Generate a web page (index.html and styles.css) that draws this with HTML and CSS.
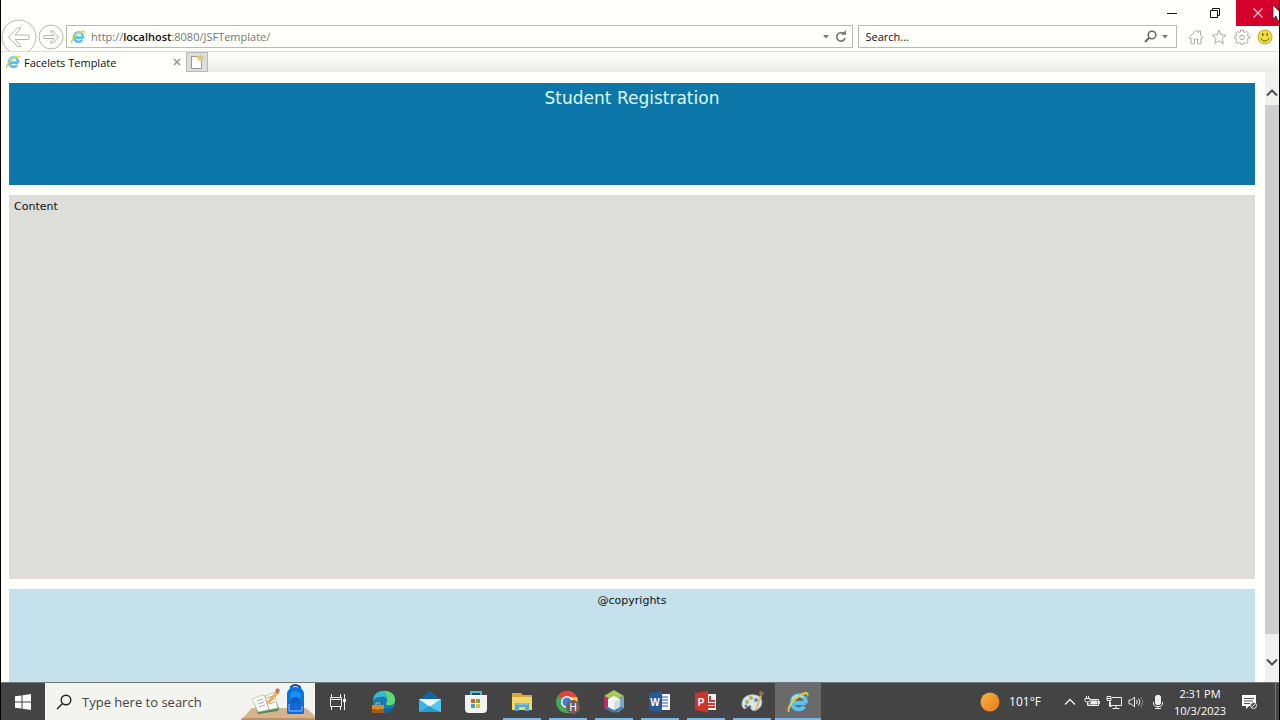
FILE: index.html
```html
<!DOCTYPE html>
<html lang="en">
  <head>
    <meta charset="utf-8">
    <title>Facelets Template</title>
    <link rel="stylesheet" href="styles.css">
  </head>
  <body>
    <!-- shared drawings -->
    <svg class="defs" aria-hidden="true">
      <symbol id="ie" viewBox="0 0 24 24">
        <path d="M20 13H8M18.400 16.500A7 7 0 1 1 19.800 13" fill="none" stroke="#58c3ee" stroke-width="4"/>
        <path d="M6 9.500A7 7 0 0 1 17 7.500" fill="none" stroke="#b4ecfc" stroke-width="1.500"/>
        <path d="M4 22C0 23 1 17 6 11S20 0 22 3c1 1 .5 3-.6 5C22 5 21 3.600 18 4.600 13 6.500 7 12 4.500 17c-1.500 3-1.500 4.500-.5 5z" fill="#e5cf3c"/>
      </symbol>
    </svg>

    <header class="chrome">
      <div class="titlebar">
        <button class="win" aria-label="Minimize"><svg width="12" height="12" viewBox="0 0 12 12"><path d="M1 6.500h10" stroke="#111"/></svg></button>
        <button class="win" aria-label="Restore"><svg width="12" height="12" viewBox="0 0 12 12" fill="none" stroke="#111"><path d="M1.500 3.500h7v7h-7zM3.500 3V1.500h7v7H9"/></svg></button>
        <button class="win close" aria-label="Close"><svg width="12" height="12" viewBox="0 0 12 12"><path d="M1.500 1.500l9 9M10.500 1.500l-9 9" stroke="#ffc4cc" stroke-width="1.300"/></svg></button>
        <svg class="cursor" width="8" height="18" viewBox="0 0 8 18"><path d="M1 1v14l3-3 2 5 2-1V8z" fill="#fff" stroke="#333" stroke-width=".8"/></svg>
      </div>
      <div class="toolbar">
        <button class="nav" aria-label="Back"><svg width="36" height="36" viewBox="0 0 36 36" fill="none" stroke="#b5b5b1"><circle cx="18" cy="18" r="17"/><path d="M7.500 18l9-9h3.500l-6 7h14v4.500H14l6 7h-3.500z"/></svg></button>
        <button class="nav" aria-label="Forward"><svg width="26" height="26" viewBox="0 0 26 26" fill="none" stroke="#b5b5b1"><circle cx="13" cy="13" r="12"/><path d="M20.500 13l-5.500-6h-3l4 4.500H6v3h10L12 19h3z"/></svg></button>
        <form class="field address">
          <svg width="16" height="16"><use href="#ie"/></svg>
          <label class="url" for="url">http://<b>localhost</b>:8080/JSFTemplate/</label>
          <input class="url-input" id="url" type="text">
          <button class="icon" type="button" aria-label="Show history"><svg width="8" height="6" viewBox="0 0 8 6"><path d="M1 1h6L4 4.500z" fill="#777"/></svg></button>
          <button class="icon" type="button" aria-label="Refresh"><svg width="12" height="14" viewBox="0 0 12 14"><path d="M8.500 3.500A4.200 4.200 0 1 0 10 8" fill="none" stroke="#777" stroke-width="1.700"/><path d="M6 4.800h5V0z" fill="#777"/></svg></button>
        </form>
        <form class="field find">
          <input class="find-input" type="text" placeholder="Search..." aria-label="Search the web">
          <button class="icon" type="button" aria-label="Search"><svg width="13" height="13" viewBox="0 0 13 13" fill="none" stroke="#666"><circle cx="8" cy="5" r="3.800" stroke-width="1.500"/><path d="M5.200 7.800L1 12" stroke-width="2"/></svg></button>
          <button class="icon" type="button" aria-label="Search providers"><svg width="8" height="6" viewBox="0 0 8 6"><path d="M1 1h6L4 4.500z" fill="#777"/></svg></button>
        </form>
        <div class="tools">
          <button class="icon" aria-label="Home"><svg width="16" height="16" viewBox="0 0 16 16" fill="none" stroke="#aaa"><path d="M1 8.500L8 1.500l2.500 2.300V2h2v4l2.500 2.500-1 1.200-1-.9v6H9.500V10h-3v4.800H3v-6l-1 .9z"/></svg></button>
          <button class="icon" aria-label="Favorites"><svg width="16" height="16" viewBox="0 0 16 16" fill="none" stroke="#aaa"><path d="M8 1l1.900 4.900 5.100.3-4 3.300 1.400 5.200L8 11.800l-4.400 2.900L5 9.500 1 6.200l5.100-.3z"/></svg></button>
          <button class="icon" aria-label="Tools"><svg width="16" height="16" viewBox="0 0 16 16" fill="none" stroke="#aaa"><path d="M6.700 1h2.600l.4 2 1.300.5 1.700-1.100 1.800 1.800L13.400 6l.5 1.200 1.600.3v2l-2 .4-.5 1.200 1.100 1.700-1.800 1.800-1.700-1.100-1.100.5-.4 1.500H6.900l-.5-1.600-1.200-.5-1.600 1.100-1.900-1.900 1.100-1.600L2.300 9.800.6 9.400v-2l1.700-.4.5-1.200-1-1.600 1.800-1.800 1.600 1L6.300 3z"/><circle cx="8" cy="8.400" r="2.300"/></svg></button>
          <button class="icon" aria-label="Send a smile"><svg width="16" height="16" viewBox="0 0 16 16"><circle cx="8" cy="8" r="7" fill="#f4df3e" stroke="#b9a534"/><path d="M5.800 4v3M10.200 4v3" stroke="#62561a" stroke-width="1.300"/><path d="M4 9c1 4 7 4 8 0" fill="none" stroke="#62561a"/></svg></button>
        </div>
      </div>
      <div class="tabs">
        <div class="tab">
          <svg width="16" height="16"><use href="#ie"/></svg>
          <span class="tab-title">Facelets Template</span>
          <button class="icon" aria-label="Close tab"><svg width="8" height="8" viewBox="0 0 8 8"><path d="M1 1l6 6M7 1L1 7" stroke="#999" stroke-width="1.700"/></svg></button>
        </div>
        <button class="newtab" aria-label="New tab"><svg width="16" height="16" viewBox="0 0 16 16"><path d="M2.500 2.500h7l3 3v9h-10z" fill="#fff" stroke="#999"/><path d="M11.500 0l1 2 2.500-.5-1 2.300 1.500 1.700-2.500.3-.8 2.200-1.600-1.800-2.400.4.700-2.300L7.500 2.500l2.700-.2z" fill="#d9cd77"/></svg></button>
      </div>
    </header>

    <div class="view">
      <main class="page">
        <div class="top">Student Registration</div>
        <div class="content">Content</div>
        <div class="bottom">@copyrights</div>
      </main>
      <div class="scroll">
        <button class="arrow" aria-label="Scroll up"><svg width="12" height="8" viewBox="0 0 12 8"><path d="M1 6.500l5-5 5 5" fill="none" stroke="#505050" stroke-width="2"/></svg></button>
        <div class="track"><div class="thumb"></div></div>
        <button class="arrow down" aria-label="Scroll down"><svg width="12" height="8" viewBox="0 0 12 8"><path d="M1 1.500l5 5 5-5" fill="none" stroke="#505050" stroke-width="2"/></svg></button>
      </div>
    </div>

    <footer class="taskbar">
      <button class="task" aria-label="Start"><svg width="16" height="16" viewBox="0 0 16 16" fill="#fff"><path d="M0 2.300l6.500-.9v6.100H0zM7.500 1.200L16 0v7.500H7.500zM0 8.500h6.500v6.100L0 13.700zM7.500 8.500H16V16l-8.500-1.200z"/></svg></button>
      <div class="search">
        <svg width="16" height="16" viewBox="0 0 16 16" fill="none" stroke="#222" stroke-width="1.400"><circle cx="10" cy="6" r="4.800"/><path d="M6.500 9.500L1 15"/></svg>
        <input class="search-input" type="text" placeholder="Type here to search" aria-label="Type here to search">
        <svg class="art" width="74" height="37" viewBox="0 0 74 37">
          <path d="M0 37l11-12h54l9 8v4z" fill="#d5b38b"/><path d="M0 37l1-2h72l1 2z" fill="#b8926a"/>
          <path d="M12 17l20-7 6 15-1 3-20 3z" fill="#4f8757"/><path d="M11 16l10-4 3 1 9-4 4 16-20 4z" fill="#f7f8ef" stroke="#a5bea4" stroke-width=".6"/>
          <path d="M24 13l4 14M16 18l6-2M17 21l6-2M18 24l6-2M26 15l6-2M27 18l6-2M28 21l6-2" stroke="#9a94b7" stroke-width=".8"/>
          <path d="M26 19l9-11 3 2-9 10-4 1z" fill="#efb34d"/><path d="M34 8l2-3 3 2-2 4z" fill="#bf7655"/>
          <path d="M50 8V4q4-4 9 0v4" fill="none" stroke="#174c9b" stroke-width="2"/>
          <path d="M46 12q0-8 8.500-8T63 12v17q0 2-3 2H49q-3 0-3-2z" fill="#0874df"/><path d="M49 11q5-6 11 0l-1 8q-5 4-9 0z" fill="#208bf0"/>
          <path d="M46 19c5-1 6 3 17-1v11q0 2-3 2H49q-3 0-3-2z" fill="#1269d5"/><path d="M48 21v7h13v-5" fill="none" stroke="#8bc5ff"/><path d="M50 16q5-4 9 0v4h-9z" fill="#0961c4"/>
        </svg>
      </div>
      <button class="task" aria-label="Task view"><svg width="18" height="18" viewBox="0 0 18 18" fill="none" stroke="#eee"><path d="M2.500 1v3.500h9V1M2.500 17v-3.500h9V17M1.500 4.500h11v9h-11zM1.500 6.500h11M15.500 1v16"/><path d="M14 6h3v3h-3z" fill="#eee" stroke="none"/></svg></button>
      <button class="task" aria-label="Edge"><svg width="26" height="26" viewBox="0 0 26 26"><circle cx="13" cy="13" r="11" fill="#1779b8"/><path d="M2 12C2 5 8 1 14 2c7 0 11 6 10 10-1 5-7 5-9 3 3-5-1-9-6-7-3 0-6 1-7 4z" fill="#35bcc8"/><path d="M13 2c7-1 12 5 11 10-1 5-7 5-9 3 4-5 1-9-2-13z" fill="#65d86d"/><path d="M11 11c-3 4 0 9 6 9l5-1-4 4-7 1z" fill="#155d9c"/><path d="M1 16h12v8H1z" fill="#a45d17"/><path d="M1 16h12v4H1z" fill="#d58b27"/><path d="M5 16v-2h4v2M6 20h2" fill="none" stroke="#efad46"/></svg></button>
      <button class="task" aria-label="Mail"><svg width="26" height="26" viewBox="0 0 26 26"><path d="M2 11L13 2l11 9v12H2z" fill="#1265aa"/><path d="M2 10h22v13H2z" fill="#3bb5e9"/><path d="M2 10h22l-11 8z" fill="#eef8fc"/><path d="M2 23l11-6 11 6z" fill="#249bd3"/><path d="M13 18l11-8v13z" fill="#54c7ef"/></svg></button>
      <button class="task" aria-label="Store"><svg width="26" height="26" viewBox="0 0 26 26"><path d="M8 8V3h10v5" fill="none" stroke="#4eb7d2" stroke-width="2"/><path d="M2 6h22v14q0 4-4 4H6q-4 0-4-4z" fill="#f2f2ef"/><path d="M8 6V3h10v3" fill="none" stroke="#4eb7d2" stroke-width="2"/><path d="M8 10h4v4H8z" fill="#e05b35"/><path d="M13 10h4v4h-4z" fill="#7bac38"/><path d="M8 15h4v4H8z" fill="#38a6d3"/><path d="M13 15h4v4h-4z" fill="#efb63f"/></svg></button>
      <button class="task running" aria-label="File Explorer"><svg width="26" height="26" viewBox="0 0 26 26"><path d="M3 4h9l2 2h9v5H3z" fill="#d4a83a"/><path d="M3 8h20v13H3z" fill="#f4d568"/><path d="M6 14h14v8h-4v-4h-6v4H6z" fill="#50a9cf"/><path d="M7 14h12v2H7z" fill="#7bc5dc"/></svg></button>
      <button class="task running" aria-label="Chrome"><svg width="26" height="26" viewBox="0 0 26 26"><circle cx="12" cy="13" r="11" fill="#42a853"/><path d="M12 13L3 7C7 0 18 0 22 8z" fill="#df4639"/><path d="M12 8h10c3 7-2 16-10 16l5-9z" fill="#f6c33b"/><circle cx="12" cy="13" r="6" fill="#fff"/><circle cx="12" cy="13" r="4.500" fill="#3c7fe1"/><circle cx="18" cy="18" r="7" fill="#765c56"/><text x="18" y="22" class="badge">H</text></svg></button>
      <button class="task running" aria-label="NetBeans"><svg width="26" height="26" viewBox="0 0 26 26"><path d="M13 1l10 6-10 5L3 7z" fill="#a5c958"/><path d="M3 7l7 4v12l-7-4z" fill="#b92f63"/><path d="M23 7l-7 4v13l7-5z" fill="#75a7cf"/><path d="M4 19l9 5 10-5-7-3z" fill="#397fac"/><path d="M13 7l6 3v8l-6 3-6-3v-8z" fill="#f5f5ef"/><path d="M13 13l6-3v8l-6 3z" fill="#d5dfdf"/></svg></button>
      <button class="task running" aria-label="Word"><svg width="26" height="26" viewBox="0 0 26 26"><path d="M13 5h10v16H13z" fill="#f5f7fb"/><path d="M14 8h7M14 11h7M14 14h7M14 17h7" stroke="#315b99"/><path d="M2 4l13-2v22L2 21z" fill="#285999"/><text x="8" y="17" class="letter">W</text></svg></button>
      <button class="task running" aria-label="PowerPoint"><svg width="26" height="26" viewBox="0 0 26 26"><path d="M13 5h10v16H13z" fill="#f9eeee"/><path d="M17 7v5h5M15 15h7M15 18h7" fill="none" stroke="#cf3a31" stroke-width="2"/><path d="M2 4l13-2v22L2 21z" fill="#cc352d"/><text x="8" y="17" class="letter">P</text></svg></button>
      <button class="task running" aria-label="Paint"><svg width="26" height="26" viewBox="0 0 26 26"><path d="M3 15C3 7 12 4 19 7c6 3 4 11 0 13-4 3-8 1-7-2s-3-1-5 1-4-1-4-4z" fill="#dce4e6" stroke="#b1c2c8"/><circle cx="8" cy="13" r="2" fill="#9dba62"/><circle cx="12" cy="9" r="2" fill="#d3a549"/><circle cx="17" cy="11" r="2" fill="#5a91ba"/><circle cx="7" cy="17" r="1.500" fill="#537ba0"/><path d="M16 21l5-15 2 1-5 14z" fill="#dfb57c"/><path d="M20 5l1-4 2 2 2 0-2 5z" fill="#8e724d"/></svg></button>
      <button class="task running active" aria-label="Internet Explorer"><svg width="24" height="24"><use href="#ie"/></svg></button>

      <div class="tray">
        <button class="weather"><svg width="20" height="20" viewBox="0 0 20 20"><defs><linearGradient id="sun" x1="0" y1="0" x2="1" y2="1"><stop offset="0" stop-color="#f8b83b"/><stop offset="1" stop-color="#e87622"/></linearGradient></defs><circle cx="10" cy="10" r="9.500" fill="url(#sun)"/></svg>101°F</button>
        <div class="status">
          <button class="icon" aria-label="Show hidden icons"><svg width="16" height="16" viewBox="0 0 16 16"><path d="M3 10.500l5-5 5 5" fill="none" stroke="#eee" stroke-width="1.300"/></svg></button>
          <button class="icon" aria-label="Battery"><svg width="16" height="16" viewBox="0 0 16 16" fill="none" stroke="#eee"><path d="M6 5.500h8.500v6H5V9M14.500 7.500h1v2h-1M1 4.500h5v2q0 1.500-2.500 1.500T1 6.500zM2.500 4V2M4.500 4V2M3.500 8v3.500H5"/><path d="M7 7h6v3H7z" fill="#eee"/></svg></button>
          <button class="icon" aria-label="Network"><svg width="16" height="16" viewBox="0 0 16 16" fill="none" stroke="#eee"><path d="M6 3.500h9.500v8H4.500V8M10 11.500v3M6.500 14.500h7M1 2.500h4v4H1zM1 4.500h4M3.500 7v5.500h2"/></svg></button>
          <button class="icon" aria-label="Volume"><svg width="16" height="16" viewBox="0 0 16 16" fill="none" stroke="#eee"><path d="M1 6h2.500l3-3v10l-3-3H1z"/><path d="M8.500 6q1.500 2 0 4M10.500 4.500q3 3.500 0 7"/><path d="M12.500 3q4.500 5 0 10" stroke="#888"/></svg></button>
          <button class="icon" aria-label="Microphone"><svg width="16" height="16" viewBox="0 0 16 16" fill="none" stroke="#eee"><rect x="5.500" y="1.500" width="5" height="9" rx="1.500" fill="#eee"/><path d="M3.500 8v2q0 2.500 4.500 2.500t4.500-2.500V8M8 12.500v2M5 14.500h6"/></svg></button>
        </div>
        <button class="clock"><time>2:31 PM</time><time>10/3/2023</time></button>
        <button class="icon" aria-label="Notifications"><svg width="18" height="18" viewBox="0 0 18 18"><path d="M2 2h14v11H9l-3 3v-3H2z" fill="#fff"/><path d="M4 5.500h10M4 8h9M4 10.500h6" stroke="#555"/><circle cx="13.500" cy="12.500" r="3" fill="#444" stroke="#eee"/><path d="M12 14l3-3" stroke="#eee"/></svg></button>
        <div class="desktop"></div>
      </div>
    </footer>
  </body>
</html>
```
FILE: styles.css
```css
* {
  box-sizing: border-box;
}
body {
  display: flex;
  flex-direction: column;
  height: 100vh;
  margin: 0;
  border: 1px solid #000;
  border-width: 0 1px;
  overflow: hidden;
  background: #fffffb;
  font-family: "Open Sans", "Noto Sans", sans-serif;
  font-size: 11px;
  color: #111;
}
button, input {
  padding: 0;
  border: 0;
  background: none;
  font: inherit;
  color: inherit;
}
input {
  min-width: 0;
  outline: none;
}
svg {
  display: block;
  flex: none;
}
.defs {
  position: absolute;
  width: 0;
  height: 0;
}
.icon {
  display: flex;
  align-items: center;
  justify-content: center;
}

/* browser window */
.chrome {
  flex: none;
}
.titlebar {
  position: relative;
  display: flex;
  justify-content: flex-end;
  height: 25px;
}
.win {
  display: flex;
  align-items: center;
  justify-content: center;
  width: 43px;
  height: 26px;
}
.close {
  background: #d4002b;
}
.cursor {
  position: absolute;
  top: 4px;
  right: -1px;
}
.toolbar {
  display: flex;
  height: 26px;
}
.nav {
  display: flex;
  align-items: center;
  height: 23px;
}
.nav + .nav {
  margin: 0 2px 0 1px;
}
.field {
  display: flex;
  align-items: center;
  height: 23px;
  border: 1px solid #b9b9b5;
  background: #fffffb;
}
.address {
  position: relative;
  flex: 1;
  gap: 5px;
  padding: 0 5px 0 3px;
  color: #777;
}
.url {
  flex: 1;
}
.url b {
  font-weight: 600;
  color: #111;
}
.url-input {
  position: absolute;
  inset: 0 40px 0 20px;
}
.find {
  width: 25%;
  gap: 4px;
  margin-left: 5px;
  padding: 0 7px;
}
.find-input {
  flex: 1;
}
.find-input::placeholder, .search-input::placeholder {
  color: inherit;
  opacity: 1;
}
.tools {
  display: flex;
  gap: 7px;
  height: 23px;
  padding: 0 6px 0 11px;
}
.tabs {
  position: relative;
  display: flex;
  height: 21px;
  border-top: 1px solid #deded8;
  background: linear-gradient(#fffffb, #ebebe8);
}
.tab {
  display: flex;
  align-items: center;
  gap: 3px;
  width: 185px;
  padding: 0 5px 0 4px;
  background: #fffffb;
}
.tab-title {
  flex: 1;
}
.newtab {
  display: flex;
  align-items: center;
  justify-content: center;
  width: 22px;
  border: 1px solid #b9b9b9;
  background: #dededc;
}

/* page */
.view {
  display: flex;
  flex: 1;
  min-height: 0;
}
.page {
  flex: 1;
  padding: 11px 10px 0 8px;
  overflow: hidden;
  font-family: Verdana, "DejaVu Sans", sans-serif;
  font-size: 11px;
  line-height: 14px;
}
.top, .content, .bottom {
  padding: 5px;
}
.top {
  min-height: 102px;
  margin-bottom: 10px;
  background: #0c76a8;
  color: #dcfaff;
  font-size: 17px;
  line-height: 20px;
  text-align: center;
}
.content {
  min-height: 384px;
  margin-bottom: 10px;
  background: #ddddda;
}
.bottom {
  min-height: 102px;
  background: #c5e1ec;
  text-align: center;
}
.scroll {
  display: flex;
  flex-direction: column;
  width: 14px;
  background: #f0f0ee;
}
.arrow {
  display: flex;
  align-items: flex-end;
  justify-content: center;
  height: 33px;
  padding-bottom: 8px;
}
.down {
  height: 32px;
  padding-bottom: 16px;
}
.track {
  flex: 1;
}
.thumb {
  height: 97%;
  background: #cdcdcb;
}

/* taskbar */
.taskbar {
  display: flex;
  flex: none;
  height: 38px;
  border-top: 1px solid #777;
  background: #444;
  color: #fff;
  font-size: 11px;
}
.task {
  display: flex;
  align-items: center;
  justify-content: center;
  flex: none;
  width: 46px;
}
.task:first-child {
  width: 44px;
}
.running {
  background: linear-gradient(#76b9ed, #76b9ed) center bottom / 38px 2px no-repeat;
}
.active {
  background-color: #6a6a6a;
  background-size: 46px 2px;
}
.badge, .letter {
  fill: #fff;
  font-family: "Liberation Sans", sans-serif;
  font-size: 10px;
  text-anchor: middle;
}
.letter {
  font-weight: bold;
}
.search {
  display: flex;
  align-items: center;
  width: 270px;
  padding-left: 11px;
  background: #f3f3f0;
  color: #444;
  font-size: 13px;
}
.search-input {
  flex: 1;
  margin-left: 10px;
}
.tray {
  display: flex;
  align-items: center;
  margin-left: auto;
}
.weather {
  display: flex;
  align-items: center;
  gap: 9px;
  font-size: 12px;
}
.status {
  display: flex;
  gap: 6px;
  margin: 0 8px 0 21px;
}
.clock {
  display: flex;
  flex-direction: column;
  align-items: center;
  width: 52px;
  margin-right: 14px;
  line-height: 17px;
}
.desktop {
  align-self: stretch;
  width: 4px;
  margin-left: 17px;
  border-left: 1px solid #777;
}
```
